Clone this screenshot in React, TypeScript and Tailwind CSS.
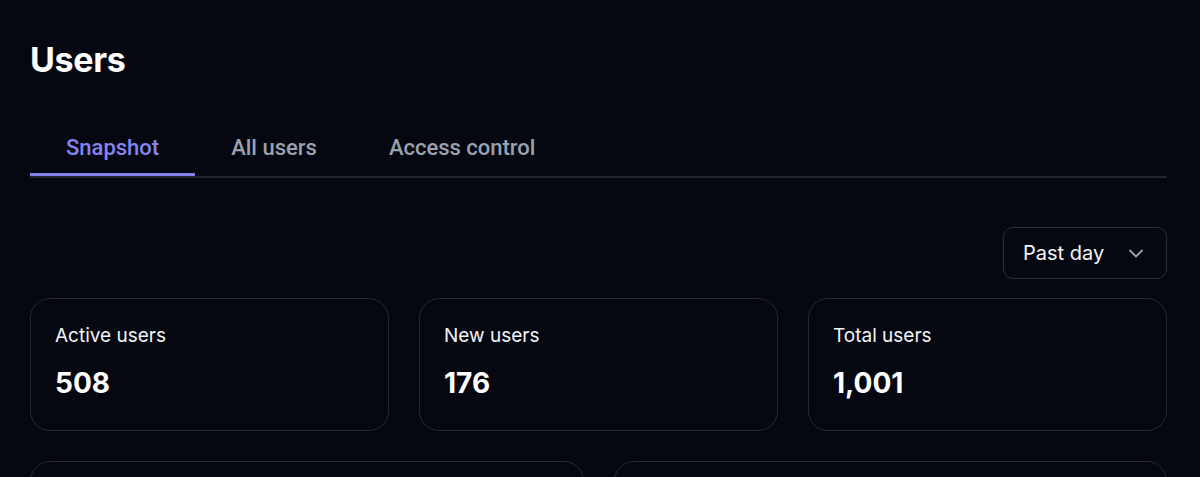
import React from "react";

const tabs = ["Snapshot", "All users", "Access control"];
const stats = [
  { label: "Active users", value: "508" },
  { label: "New users", value: "176" },
  { label: "Total users", value: "1,001" },
];

export default function App() {
  return (
    <div
      className="min-h-screen w-full bg-[#050811] text-white pl-[30px] pr-[33px] pt-[40px]"
      style={{ fontFamily: "Inter, 'Liberation Sans', sans-serif" }}
    >
      <h1 className="text-[34px] leading-[40px] font-bold tracking-[-0.01em]">Users</h1>
      <div
        className="mt-[42px] flex border-b-2 border-[#22262f]"
        style={{ fontFamily: "Roboto, 'Liberation Sans', sans-serif" }}
      >
        {tabs.map((t, i) => (
          <div
            key={t}
            className={
              "px-[36px] pt-[12px] pb-[11px] text-[22px] leading-[28px] font-medium border-b-[3px] " +
              (i === 0 ? "text-[#8585f2] border-[#7f7fee]" : "text-[#9ba1ad] border-transparent")
            }
          >
            {t}
          </div>
        ))}
      </div>
      <div className="mt-[49px] flex justify-end">
        <button className="h-[52px] w-[164px] flex items-center justify-between pl-[19px] pr-[18px] rounded-[10px] border border-[#2a2f3a] text-[20px] text-[#f3f4f6]">
          <span>Past day</span>
          <svg width="24" height="24" viewBox="0 0 24 24" fill="none" stroke="#9ca3af" strokeWidth="1.8" strokeLinecap="round" strokeLinejoin="round">
            <path d="M6 9.5l6 6 6-6" />
          </svg>
        </button>
      </div>
      <div className="mt-[19px] grid grid-cols-3 gap-[30px]">
        {stats.map((s) => (
          <div key={s.label} className="h-[133px] rounded-[20px] border border-[#262a34] px-[24px] pt-[24px]">
            <div className="text-[19px] leading-[26px] text-[#f3f4f6]">{s.label}</div>
            <div className="mt-[16px] text-[28px] leading-[36px] font-bold">{s.value}</div>
          </div>
        ))}
      </div>
      <div className="mt-[30px] grid grid-cols-2 gap-[30px]">
        <div className="h-[200px] rounded-[20px] border border-[#262a34]" />
        <div className="h-[200px] rounded-[20px] border border-[#262a34]" />
      </div>
    </div>
  );
}
